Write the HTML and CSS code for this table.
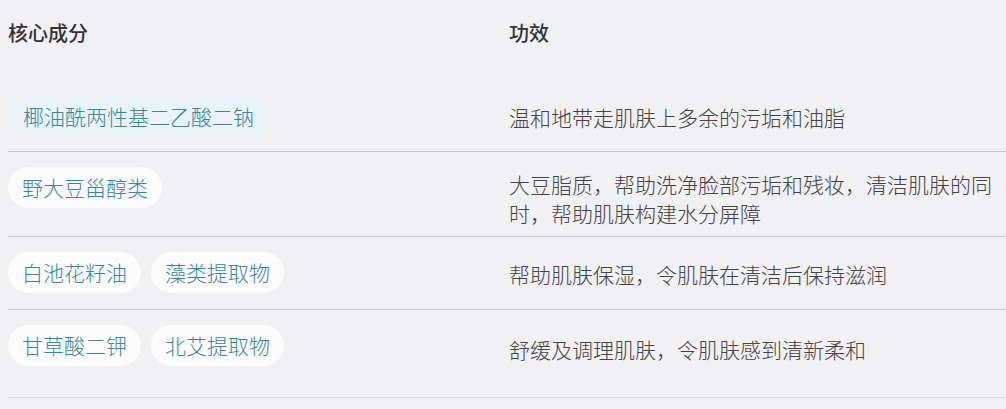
FILE: index.html
```html
<!DOCTYPE html>
<html lang="zh">
<head>
<meta charset="utf-8">
<link rel="stylesheet" href="styles.css">
</head>
<body>
<div class="table">
  <div class="head">
    <div class="hcell">核心成分</div>
    <div class="hcell">功效</div>
  </div>
  <div class="row r1">
    <div class="tags"><span class="pill soft">椰油酰两性基二乙酸二钠</span></div>
    <div class="desc">温和地带走肌肤上多余的污垢和油脂</div>
  </div>
  <div class="row r2">
    <div class="tags"><span class="pill">野大豆甾醇类</span></div>
    <div class="desc">大豆脂质，帮助洗净脸部污垢和残妆，清洁肌肤的同时，帮助肌肤构建水分屏障</div>
  </div>
  <div class="row r3">
    <div class="tags"><span class="pill">白池花籽油</span><span class="pill">藻类提取物</span></div>
    <div class="desc">帮助肌肤保湿，令肌肤在清洁后保持滋润</div>
  </div>
  <div class="row r4 last">
    <div class="tags"><span class="pill">甘草酸二钾</span><span class="pill">北艾提取物</span></div>
    <div class="desc">舒缓及调理肌肤，令肌肤感到清新柔和</div>
  </div>
</div>
</body>
</html>
```
FILE: styles.css
```css
html, body {
  margin: 0;
  padding: 0;
  background: #f1f0f2;
}
body {
  padding-left: 8px;
  font-family: "Noto Sans CJK SC", "Noto Sans", sans-serif;
  font-size: 21px;
  font-weight: 300;
  color: #454545;
}
.table {
  display: flex;
  flex-direction: column;
}
.head {
  display: grid;
  grid-template-columns: 501px 1fr;
  height: 82px;
  padding-top: 20px;
  box-sizing: border-box;
}
.hcell {
  font-weight: 500;
  color: #333;
  line-height: 26px;
  font-size: 20px;
}
.row {
  display: grid;
  grid-template-columns: 501px 1fr;
  align-items: start;
  border-bottom: 1px solid #c9c8cb;
}
.row.last {
  border-bottom-color: #dcdbde;
}
.tags {
  display: flex;
  gap: 10px;
  padding-top: 15px;
}
.r1 { height: 69px; }
.r2 { height: 84px; }
.r3 { height: 72px; }
.r4 { height: 87px; }
.r1 .desc { padding-top: 21px; }
.r2 .desc { padding-top: 18px; }
.r3 .desc { padding-top: 23px; }
.r4 .desc { padding-top: 25px; }
.pill {
  display: inline-block;
  height: 41px;
  line-height: 41px;
  padding: 0 14px;
  border-radius: 21px;
  background: #fcfcfd;
  color: #3a8897;
  white-space: nowrap;
}
.pill.soft {
  background: #eaf3f7;
  box-shadow: 0 0 6px 2px #edf3f6;
  height: 38px;
  line-height: 38px;
}
.r1 .tags { padding-left: 1px; }
.desc {
  line-height: 29px;
  color: #444;
}
```
